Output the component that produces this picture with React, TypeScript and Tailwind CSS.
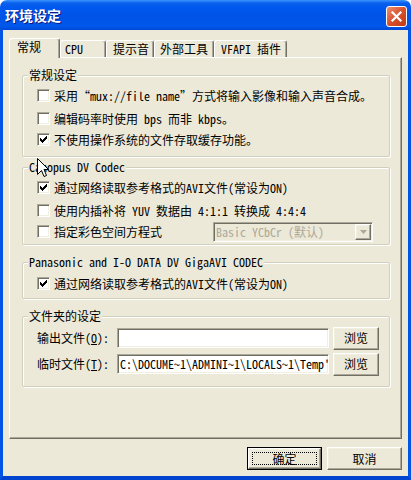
import React from "react"

const FONT = "font-['Noto_Sans_Mono_CJK_SC','Noto_Sans_CJK_SC',monospace] text-[12px] leading-[12px]"
const TXT = `${FONT} text-black`
const RAISED =
  "border border-t-white border-l-white border-r-[#716F64] border-b-[#716F64] bg-[#ECE9D8] shadow-[inset_-1px_-1px_0_#ACA899,inset_1px_1px_0_#F1EFE2]"
const SUNKEN =
  "border border-t-[#ACA899] border-l-[#ACA899] border-r-white border-b-white shadow-[inset_1px_1px_0_#716F64,inset_-1px_-1px_0_#F1EFE2]"

function Checkbox({ checked }: { checked?: boolean }) {
  return (
    <span className={`relative block w-[13px] h-[13px] shrink-0 bg-white ${SUNKEN}`}>
      {checked && (
        <svg className="absolute left-[-1px] top-[-1px]" width="13" height="13" viewBox="0 0 13 13">
          <path
            d="M3 5h1v3H3zM4 6h1v3H4zM5 7h1v3H5zM6 6h1v3H6zM7 5h1v3H7zM8 4h1v3H8zM9 3h1v3H9z"
            fill="#000"
          />
        </svg>
      )}
    </span>
  )
}

function CheckRow({ checked, label, extra, className = "" }: { checked?: boolean; label: string; extra?: React.ReactNode; className?: string }) {
  return (
    <div className={`flex items-center h-[21px] pl-[14px] ${className}`}>
      <Checkbox checked={checked} />
      <span className={`ml-[4px] whitespace-nowrap ${TXT}`}>{label}</span>
      {extra}
    </div>
  )
}

function Group({ title, height, className = "", children }: { title: string; height: string; className?: string; children: React.ReactNode }) {
  return (
    <div
      className={`relative w-[368px] ${height} border border-[#D0D0BF] rounded-[2px] shadow-[inset_1px_1px_0_#fff,1px_1px_0_#fff] ${className}`}
    >
      <span className={`absolute left-[5px] top-[-7px] px-[1px] bg-[#ECE9D8] whitespace-nowrap ${TXT}`}>{title}</span>
      {children}
    </div>
  )
}

function Tab({ label, active, w, pl }: { label: string; active?: boolean; w: string; pl: string }) {
  if (active) {
    return (
      <div
        className={`relative z-10 -mb-[1px] h-[20px] ${w} ${pl} pt-[2px] bg-[#ECE9D8] border-l border-t border-r border-l-white border-t-white border-r-[#716F64] rounded-t-[3px] shadow-[inset_-1px_0_0_#ACA899]`}
      >
        <span className={`block whitespace-nowrap ${TXT}`}>{label}</span>
      </div>
    )
  }
  return (
    <div
      className={`h-[17px] ${w} ${pl} pt-[2px] bg-[#ECE9D8] border-l border-t border-r border-l-white border-t-white border-r-[#716F64] rounded-t-[3px] shadow-[inset_-1px_0_0_#ACA899]`}
    >
      <span className={`block whitespace-nowrap ${TXT}`}>{label}</span>
    </div>
  )
}

function BrowseRow({ label, accel, value, className = "" }: { label: string; accel: string; value?: string; className?: string }) {
  return (
    <div className={`flex items-center h-[24px] pl-[14px] ${className}`}>
      <span className={`w-[80px] whitespace-nowrap ${TXT}`}>
        {label}(<span className="underline">{accel}</span>):
      </span>
      <div className={`w-[212px] h-[20px] bg-white overflow-hidden pl-[2px] flex items-center ${SUNKEN}`}>
        <span className={`whitespace-nowrap ${TXT}`}>{value}</span>
      </div>
      <div className={`ml-[4px] w-[46px] h-[23px] flex items-center justify-center ${RAISED}`}>
        <span className={TXT}>浏览</span>
      </div>
    </div>
  )
}

export default function App() {
  return (
    <div className="relative w-[411px] h-[480px] bg-white">
      {/* title bar */}
      <div className="h-[30px] rounded-t-[7px] flex justify-between bg-[linear-gradient(to_bottom,#3D95FF_0px,#0A61EC_3px,#0058EE_7px,#0053E6_18px,#0058EC_26px,#0048D6_30px)]">
        <span className="pl-[5px] pt-[7px] font-['Noto_Sans_CJK_SC',sans-serif] font-bold text-[14px] leading-[16px] text-white [text-shadow:1px_1px_0_#0A1883]">
          环境设定
        </span>
        <div className="mt-[6px] mr-[4px] w-[21px] h-[21px] rounded-[3px] border border-white bg-[linear-gradient(135deg,#EE8F70,#D9512C_50%,#C23A14)] flex items-center justify-center">
          <svg width="13" height="13" viewBox="0 0 13 13">
            <path d="M2.5 2.5l8 8M10.5 2.5l-8 8" stroke="#fff" strokeWidth="2.2" strokeLinecap="square" />
          </svg>
        </div>
      </div>

      {/* window body */}
      <div className="h-[450px] bg-[#ECE9D8] border-l-[3px] border-r-[3px] border-b-[4px] border-l-[#0055E5] border-r-[#0055E5] border-b-[#0043CF] px-[6px] pt-[8px]">
        <div className="flex items-end h-[19px]">
          <Tab label="常规" active w="w-[51px]" pl="pl-[7px]" />
          <Tab label="CPU" w="w-[46px]" pl="pl-[4px]" />
          <Tab label="提示音" w="w-[48px]" pl="pl-[6px]" />
          <Tab label="外部工具" w="w-[60px]" pl="pl-[5px]" />
          <Tab label="VFAPI 插件" w="w-[73px]" pl="pl-[6px]" />
        </div>

        <div className="h-[382px] w-[393px] border border-t-white border-l-white border-r-[#716F64] border-b-[#716F64] shadow-[inset_-1px_-1px_0_#ACA899] pt-[17px] pl-[12px]">
          <Group title="常规设定" height="h-[82px]" className="pt-[9px]">
            <CheckRow label="采用“mux://file name”方式将输入影像和输入声音合成。" />
            <CheckRow className="mt-[2px]" label="编辑码率时使用 bps 而非 kbps。" />
            <CheckRow checked label="不使用操作系统的文件存取缓存功能。" />
          </Group>

          <Group title="Canopus DV Codec" height="h-[78px]" className="mt-[10px] pt-[9px]">
            <CheckRow checked label="通过网络读取参考格式的AVI文件(常设为ON)" />
            <CheckRow className="mt-[2px]" label="使用内插补将 YUV 数据由 4:1:1 转换成 4:4:4" />
            <CheckRow
              label="指定彩色空间方程式"
              extra={
                <div className={`ml-auto mr-[16px] w-[160px] h-[20px] flex items-center bg-[#ECE9D8] ${SUNKEN}`}>
                  <span className={`flex-1 pl-[2px] whitespace-nowrap ${FONT} text-[#ACA899]`}>Basic YCbCr (默认)</span>
                  <div className={`w-[16px] h-[16px] mr-[1px] flex items-center justify-center ${RAISED}`}>
                    <svg width="7" height="4" viewBox="0 0 7 4">
                      <path d="M0 0h7L3.5 4z" fill="#ACA899" />
                    </svg>
                  </div>
                </div>
              }
            />
          </Group>

          <Group title="Panasonic and I-O DATA DV GigaAVI CODEC" height="h-[37px]" className="mt-[17px] pt-[10px]">
            <CheckRow checked label="通过网络读取参考格式的AVI文件(常设为ON)" />
          </Group>

          <Group title="文件夹的设定" height="h-[71px]" className="mt-[17px] pt-[9px]">
            <BrowseRow label="输出文件" accel="O" />
            <BrowseRow className="mt-[2px]" label="临时文件" accel="T" value="C:\DOCUME~1\ADMINI~1\LOCALS~1\Temp'" />
          </Group>
        </div>

        <div className="flex justify-end gap-[5px] mt-[8px]">
          <div className="w-[75px] h-[23px] border border-black">
            <div className={`relative h-full flex items-center justify-center ${RAISED}`}>
              <span className="absolute inset-[3px] border border-dotted border-black" />
              <span className={TXT}>确定</span>
            </div>
          </div>
          <div className={`w-[75px] h-[23px] flex items-center justify-center ${RAISED}`}>
            <span className={TXT}>取消</span>
          </div>
        </div>
      </div>

      {/* mouse pointer */}
      <svg className="absolute left-[37px] top-[158px]" width="13" height="21" viewBox="0 0 13 21">
        <path d="M0.5 0.5V16.5L4.5 12.5L7 18.5L9.5 17.5L7 11.5H11.5Z" fill="#fff" stroke="#000" strokeWidth="1" />
      </svg>
    </div>
  )
}
